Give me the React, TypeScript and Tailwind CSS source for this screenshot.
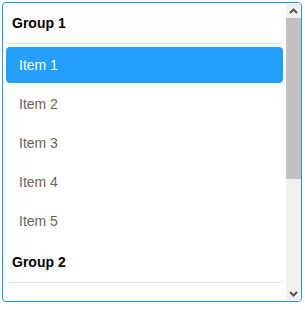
import React from "react";

const items = ["Item 1", "Item 2", "Item 3", "Item 4", "Item 5"];

function Chevron({ up }: { up?: boolean }) {
  return (
    <svg width="9" height="6" viewBox="0 0 9 6">
      {up ? (
        <polyline points="1,5 4.5,1.5 8,5" fill="none" stroke="#505050" strokeWidth="2" />
      ) : (
        <polyline points="1,1 4.5,4.5 8,1" fill="none" stroke="#505050" strokeWidth="2" />
      )}
    </svg>
  );
}

export default function App() {
  return (
    <div className="w-[305px] h-[310px] bg-white pt-[2px] pl-[2px]" style={{ fontFamily: '"Liberation Sans", Arial, sans-serif' }}>
      <div className="w-[300px] h-[300px] border border-[#2196f3] rounded-[4px] overflow-hidden bg-white flex">
        <div className="flex-1 min-w-0 overflow-hidden px-[3px]">
          <div className="h-[41px] flex items-center pl-[6px] text-[14px] font-bold text-black border-b border-[#e0e0e0] rounded-[4px]">
            Group 1
          </div>
          {items.map((it, i) => {
            const sel = i === 0;
            return (
              <div
                key={it}
                className={`mt-[3px] h-[36px] flex items-center pl-[13px] text-[14px] rounded-[4px] ${sel ? "bg-[#24a0fc] text-white" : "text-[#6e6257]"}`}
              >
                {it}
              </div>
            );
          })}
          <div className="mt-[3px] h-[41px] flex items-center pl-[6px] text-[14px] font-bold text-black border-b border-[#e0e0e0] rounded-[4px]">
            Group 2
          </div>
        </div>
        <div className="w-[15px] bg-[#f1f1f1] flex flex-col">
          <div className="h-[15px] flex items-center justify-center">
            <Chevron up />
          </div>
          <div className="h-[161px] bg-[#c1c1c1]" />
          <div className="flex-1" />
          <div className="h-[15px] flex items-center justify-center">
            <Chevron />
          </div>
        </div>
      </div>
    </div>
  );
}
